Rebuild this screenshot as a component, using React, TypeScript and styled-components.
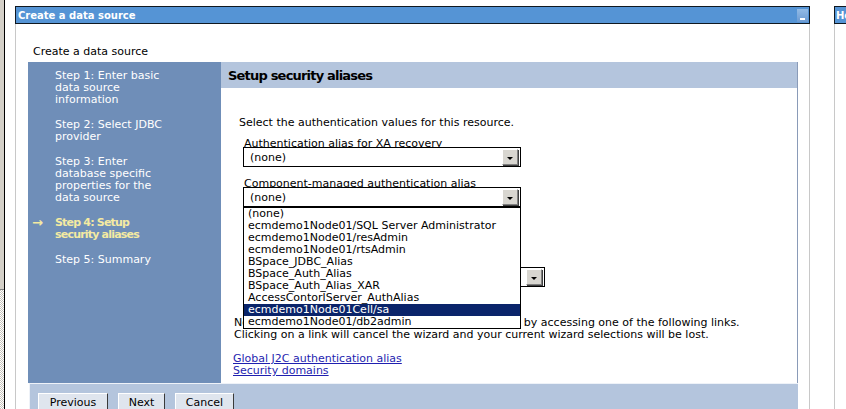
import React from 'react';
import styled, { createGlobalStyle } from 'styled-components';

const Global = createGlobalStyle`
  html, body { margin: 0; padding: 0; background: #fff; overflow: hidden; }
  body { font-family: "DejaVu Sans", Verdana, sans-serif; font-size: 11px; color: #000; }
  #root { width: 846px; height: 409px; overflow: hidden; }
`;

const Page = styled.div`
  display: flex;
  width: 846px;
  height: 409px;
  overflow: hidden;
`;

const FrameEdge = styled.div`
  width: 4px;
  flex: none;
  border-right: 1px solid #000;
  display: flex;
  flex-direction: column;
`;

const EdgePlain = styled.div`
  height: 290px;
  background: #d4d0c8;
  border-bottom: 1px solid #808080;
  box-sizing: border-box;
`;

const EdgeTrack = styled.div`
  flex: 1;
  background: repeating-conic-gradient(#ffffff 0 25%, #c8c4bc 0 50%) 0 0 / 2px 2px;
`;

const Portlet = styled.div`
  width: 795px;
  flex: none;
  margin: 6px 0 0 10px;
  display: flex;
  flex-direction: column;
`;

const TitleBar = styled.div`
  height: 18px;
  box-sizing: border-box;
  background: #5594d5;
  border: 1px solid #101820;
  color: #fff;
  font-weight: bold;
  font-size: 10px;
  display: flex;
  align-items: center;
  justify-content: space-between;
  padding: 0 1px 0 2px;
  white-space: nowrap;
  overflow: hidden;
`;

const MinButton = styled.div`
  width: 11px;
  height: 13px;
  background: linear-gradient(#93bbe6, #6c9bd2);
  display: flex;
  align-items: flex-end;
  justify-content: center;
  padding-bottom: 2px;
  box-sizing: border-box;
  &::after {
    content: '';
    width: 5px;
    height: 2px;
    background: #fff;
  }
`;

const PortletBody = styled.div`
  flex: 1;
  border-left: 1px solid #c8c8c8;
  border-right: 1px solid #c8c8c8;
  padding: 0 0 0 12px;
  overflow: hidden;
`;

const PageHeading = styled.div`
  margin: 22px 0 4px 5px;
  line-height: 12px;
`;

const Wizard = styled.div`
  width: 770px;
  display: flex;
  flex-direction: column;
`;

const WizardTop = styled.div`
  display: grid;
  grid-template-columns: 193px 1fr;
  grid-template-rows: 26px 295px;
`;

const Nav = styled.div`
  grid-row: 1 / 3;
  background: #6f8eb8;
  padding-top: 8px;
  display: flex;
  flex-direction: column;
  gap: 13px;
`;

const NavItem = styled.div<{ $current?: boolean }>`
  display: grid;
  grid-template-columns: 27px 1fr;
  color: ${(p) => (p.$current ? '#f4eaa2' : '#fff')};
  font-weight: ${(p) => (p.$current ? 'bold' : 'normal')};
  letter-spacing: ${(p) => (p.$current ? '-0.8px' : '0')};
  line-height: 12px;
`;

const NavMarker = styled.span`
  padding-left: 4px;
  font-size: 13px;
  font-weight: bold;
  letter-spacing: 0;
`;

const Header = styled.div`
  background: #b4c5dd;
  border-right: 1px solid #8a9bb8;
  display: flex;
  align-items: center;
  padding-left: 7px;
  font-size: 13px;
  font-weight: bold;
  letter-spacing: -0.8px;
`;

const Content = styled.div`
  background: #fff;
  border-right: 1px solid #8a9bb8;
  padding: 29px 0 0 13px;
  position: relative;
`;

const Intro = styled.div`
  padding-left: 5px;
  line-height: 12px;
  margin-bottom: -2px;
`;

const Form = styled.div`
  padding-left: 9px;
  display: flex;
  flex-direction: column;
`;

const Label = styled.div`
  margin: 11px 0 -2px 0;
  padding-left: 1px;
  line-height: 11px;
  white-space: nowrap;
`;

const Field = styled.div`
  position: relative;
`;

const SelectBox = styled.div<{ $width: number }>`
  width: ${(p) => p.$width}px;
  height: 20px;
  box-sizing: border-box;
  border: 1px solid #000;
  background: #fff;
  display: flex;
  align-items: center;
  justify-content: space-between;
  padding: 0 2px 0 6px;
`;

const DropButton = styled.div`
  width: 16px;
  height: 16px;
  box-sizing: border-box;
  background: #d8d6d0;
  border: 1px solid;
  border-color: #fff #808080 #808080 #fff;
  box-shadow: 1px 1px 0 #404040;
  display: flex;
  align-items: center;
  justify-content: center;
  &::after {
    content: '';
    border-left: 3px solid transparent;
    border-right: 3px solid transparent;
    border-top: 3px solid #000;
    margin-top: 2px;
  }
`;

const OptionList = styled.div`
  position: absolute;
  top: 100%;
  left: 0;
  width: 278px;
  box-sizing: border-box;
  border: 1px solid #000;
  background: #fff;
  z-index: 5;
`;

const Option = styled.div<{ $selected?: boolean }>`
  line-height: 12px;
  padding-left: 4px;
  white-space: nowrap;
  background: ${(p) => (p.$selected ? '#0a246a' : 'transparent')};
  color: ${(p) => (p.$selected ? '#fff' : '#000')};
`;

const Note = styled.p`
  margin: 30px 0 0 0;
  line-height: 12px;
`;

const Links = styled.div`
  margin-top: 12px;
  display: flex;
  flex-direction: column;
  margin-left: -1px;
`;

const Link = styled.a`
  color: #1f1fb0;
  text-decoration: underline;
  line-height: 12px;
  width: max-content;
`;

const Footer = styled.div`
  margin-left: 1px;
  height: 40px;
  background: #b4c5dd;
  border-top: 1px solid #eef2f8;
  border-left: 1px solid #eef2f8;
  display: flex;
  gap: 10px;
  padding: 9px 0 0 8px;
  box-sizing: border-box;
`;

const WizButton = styled.button<{ $width: number }>`
  width: ${(p) => p.$width}px;
  height: 22px;
  box-sizing: border-box;
  background: #dfe5ee;
  border: 1px solid;
  border-color: #fff #3a3a3a #3a3a3a #fff;
  font-family: "DejaVu Sans", Verdana, sans-serif;
  font-size: 11px;
  color: #000;
  padding: 3px 0 0 0;
  line-height: 12px;
  display: flex;
  justify-content: center;
  align-items: flex-start;
`;

const HelpPortlet = styled.div`
  flex: 1;
  margin: 6px 0 0 24px;
  display: flex;
  flex-direction: column;
  min-width: 0;
`;

const HelpTitle = styled(TitleBar)`
  border-right: none;
  padding-left: 1px;
`;

const HelpBody = styled.div`
  flex: 1;
  border-left: 1px solid #c8c8c8;
`;

const steps: { lines: string[]; current?: boolean }[] = [
  { lines: ['Step 1: Enter basic', 'data source', 'information'] },
  { lines: ['Step 2: Select JDBC', 'provider'] },
  { lines: ['Step 3: Enter', 'database specific', 'properties for the', 'data source'] },
  { lines: ['Step 4: Setup', 'security aliases'], current: true },
  { lines: ['Step 5: Summary'] },
];

const options = [
  '(none)',
  'ecmdemo1Node01/SQL Server Administrator',
  'ecmdemo1Node01/resAdmin',
  'ecmdemo1Node01/rtsAdmin',
  'BSpace_JDBC_Alias',
  'BSpace_Auth_Alias',
  'BSpace_Auth_Alias_XAR',
  'AccessContorlServer_AuthAlias',
  'ecmdemo1Node01Cell/sa',
  'ecmdemo1Node01/db2admin',
];

export default function App() {
  return (
    <>
      <Global />
      <Page>
        <FrameEdge>
          <EdgePlain />
          <EdgeTrack />
        </FrameEdge>
        <Portlet>
          <TitleBar>
            <span>Create a data source</span>
            <MinButton />
          </TitleBar>
          <PortletBody>
            <PageHeading>Create a data source</PageHeading>
            <Wizard>
              <WizardTop>
                <Nav>
                  {steps.map((s, i) => (
                    <NavItem key={i} $current={s.current}>
                      <NavMarker>{s.current ? '→' : ''}</NavMarker>
                      <span>
                        {s.lines.map((l, j) => (
                          <React.Fragment key={j}>
                            {l}
                            {j < s.lines.length - 1 && <br />}
                          </React.Fragment>
                        ))}
                      </span>
                    </NavItem>
                  ))}
                </Nav>
                <Header>Setup security aliases</Header>
                <Content>
                  <Intro>Select the authentication values for this resource.</Intro>
                  <Form>
                    <Label>Authentication alias for XA recovery</Label>
                    <Field>
                      <SelectBox $width={278}>
                        <span>(none)</span>
                        <DropButton />
                      </SelectBox>
                    </Field>
                    <Label>Component-managed authentication alias</Label>
                    <Field>
                      <SelectBox $width={278}>
                        <span>(none)</span>
                        <DropButton />
                      </SelectBox>
                      <OptionList>
                        {options.map((o) => (
                          <Option key={o} $selected={o === 'ecmdemo1Node01Cell/sa'}>
                            {o}
                          </Option>
                        ))}
                      </OptionList>
                    </Field>
                    <Label>Mapping-configuration alias</Label>
                    <Field>
                      <SelectBox $width={278}>
                        <span>(none)</span>
                        <DropButton />
                      </SelectBox>
                    </Field>
                    <Label>Container-managed authentication alias</Label>
                    <Field>
                      <SelectBox $width={302}>
                        <span>(none)</span>
                        <DropButton />
                      </SelectBox>
                    </Field>
                  </Form>
                  <Note>
                    Note: You can create new J2C authentication aliases by accessing one of the following links.
                    <br />
                    Clicking on a link will cancel the wizard and your current wizard selections will be lost.
                  </Note>
                  <Links>
                    <Link href="#">Global J2C authentication alias</Link>
                    <Link href="#">Security domains</Link>
                  </Links>
                </Content>
              </WizardTop>
              <Footer>
                <WizButton $width={70}>Previous</WizButton>
                <WizButton $width={47}>Next</WizButton>
                <WizButton $width={59}>Cancel</WizButton>
              </Footer>
            </Wizard>
          </PortletBody>
        </Portlet>
        <HelpPortlet>
          <HelpTitle>He</HelpTitle>
          <HelpBody />
        </HelpPortlet>
      </Page>
    </>
  );
}
